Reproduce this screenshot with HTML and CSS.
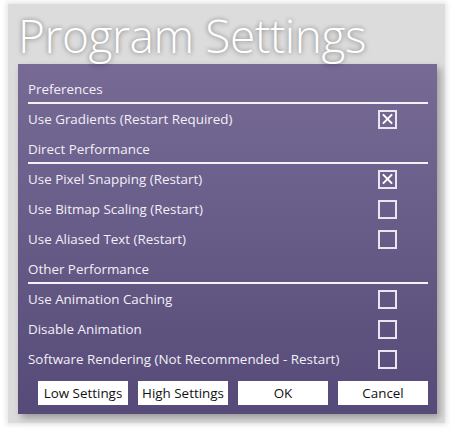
FILE: index.html
```html
<!DOCTYPE html>
<html>
<head>
<meta charset="utf-8">
<link rel="stylesheet" href="styles.css">
</head>
<body>
<div class="frame">
  <h1 class="title">Program Settings</h1>
  <div class="panel">
    <div class="row header">Preferences</div>
    <div class="row"><span>Use Gradients (Restart Required)</span><span class="check on"></span></div>
    <div class="row header">Direct Performance</div>
    <div class="row"><span>Use Pixel Snapping (Restart)</span><span class="check on"></span></div>
    <div class="row"><span>Use Bitmap Scaling (Restart)</span><span class="check"></span></div>
    <div class="row"><span>Use Aliased Text (Restart)</span><span class="check"></span></div>
    <div class="row header">Other Performance</div>
    <div class="row"><span>Use Animation Caching</span><span class="check"></span></div>
    <div class="row"><span>Disable Animation</span><span class="check"></span></div>
    <div class="row"><span>Software Rendering (Not Recommended - Restart)</span><span class="check"></span></div>
    <div class="buttons">
      <button class="btn">Low Settings</button>
      <button class="btn">High Settings</button>
      <button class="btn">OK</button>
      <button class="btn">Cancel</button>
    </div>
  </div>
</div>
</body>
</html>
```

FILE: styles.css
```css
html, body {
  margin: 0;
  padding: 0;
  background: #ffffff;
  width: 453px;
  height: 428px;
  overflow: hidden;
}
.frame {
  margin: 4px 0 0 8px;
  width: 437px;
  height: 419px;
  background: #dcdcdc;
  box-shadow: 0 0 5px 2px #e6e6e6;
  box-sizing: border-box;
  font-family: "Open Sans", "Noto Sans", sans-serif;
}
.title {
  margin: 0;
  height: 60px;
  padding-left: 10px;
  font-family: "Open Sans", sans-serif;
  font-weight: 300;
  font-size: 46px;
  line-height: 62px;
  color: #ffffff;
  letter-spacing: -0.4px;
  white-space: nowrap;
  text-shadow: 0 0 4px rgba(0,0,0,0.3), 0 1px 6px rgba(0,0,0,0.2);
}
.panel {
  margin-left: 10px;
  width: 419px;
  height: 350px;
  box-sizing: border-box;
  padding: 10px 9px 9px 10px;
  background: linear-gradient(#776b96, #564a78);
  box-shadow: 3px 4px 7px rgba(0,0,0,0.3);
}
.row {
  height: 30px;
  display: flex;
  align-items: center;
  justify-content: space-between;
  color: #f2f0f6;
  font-size: 13.4px;
  box-sizing: border-box;
}
.header {
  border-bottom: 2px solid #f4f2f8;
  padding-top: 1px;
}
.check {
  width: 19px;
  height: 19px;
  box-sizing: border-box;
  border: 2px solid #e9e6ef;
  margin-right: 31px;
  position: relative;
}
.check.on::before,
.check.on::after {
  content: "";
  position: absolute;
  left: 1px;
  top: 6.5px;
  width: 13px;
  height: 2px;
  background: #ffffff;
  transform: rotate(45deg);
}
.check.on::after {
  transform: rotate(-45deg);
}
.buttons {
  display: flex;
  gap: 10px;
  margin-top: 7px;
  padding-left: 10px;
}
.btn {
  width: 90px;
  height: 24px;
  background: #ffffff;
  border: none;
  padding: 0;
  font-family: "Open Sans", "Noto Sans", sans-serif;
  font-size: 13.4px;
  color: #111111;
}
```
